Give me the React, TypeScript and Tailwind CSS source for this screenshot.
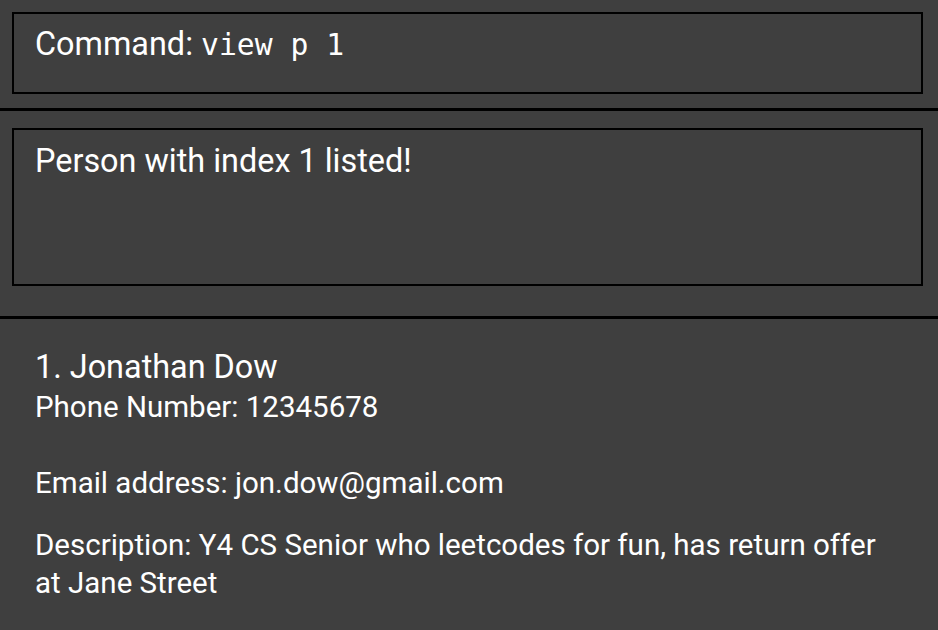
import React from "react";

export default function App() {
  return (
    <div className="w-[938px] h-[630px] overflow-hidden bg-[#3f3f3f] text-white flex flex-col" style={{ fontFamily: "Roboto, 'Liberation Sans', sans-serif" }}>
      <div className="pl-[12px] pr-[15px] pt-[12px] pb-[14px]">
        <div className="h-[82px] border-2 border-black px-[21px] pt-[10px] text-[32.4px] leading-[40px] whitespace-nowrap">
          <span>Command: </span>
          <span className="font-['DejaVu_Sans_Mono',monospace] text-[29.7px]">view p 1</span>
        </div>
      </div>
      <div className="h-[3px] bg-black" />
      <div className="pl-[12px] pr-[15px] pt-[17px] pb-[30px]">
        <div className="h-[158px] border-2 border-black px-[21px] pt-[11px] text-[32.4px] leading-[40px]">
          Person with index 1 listed!
        </div>
      </div>
      <div className="h-[3px] bg-black" />
      <div className="pl-[35px] pr-[43px] pt-[30px]">
        <div className="text-[32.4px] leading-[36px]">1. Jonathan Dow</div>
        <div className="text-[29.5px] leading-[36px] mt-[4px]">Phone Number: 12345678</div>
        <div className="text-[29.5px] leading-[36px] mt-[40px]">Email address: jon.dow@gmail.com</div>
        <div className="text-[29.5px] leading-[38px] mt-[25px]">Description: Y4 CS Senior who leetcodes for fun, has return offer at Jane Street</div>
      </div>
    </div>
  );
}
